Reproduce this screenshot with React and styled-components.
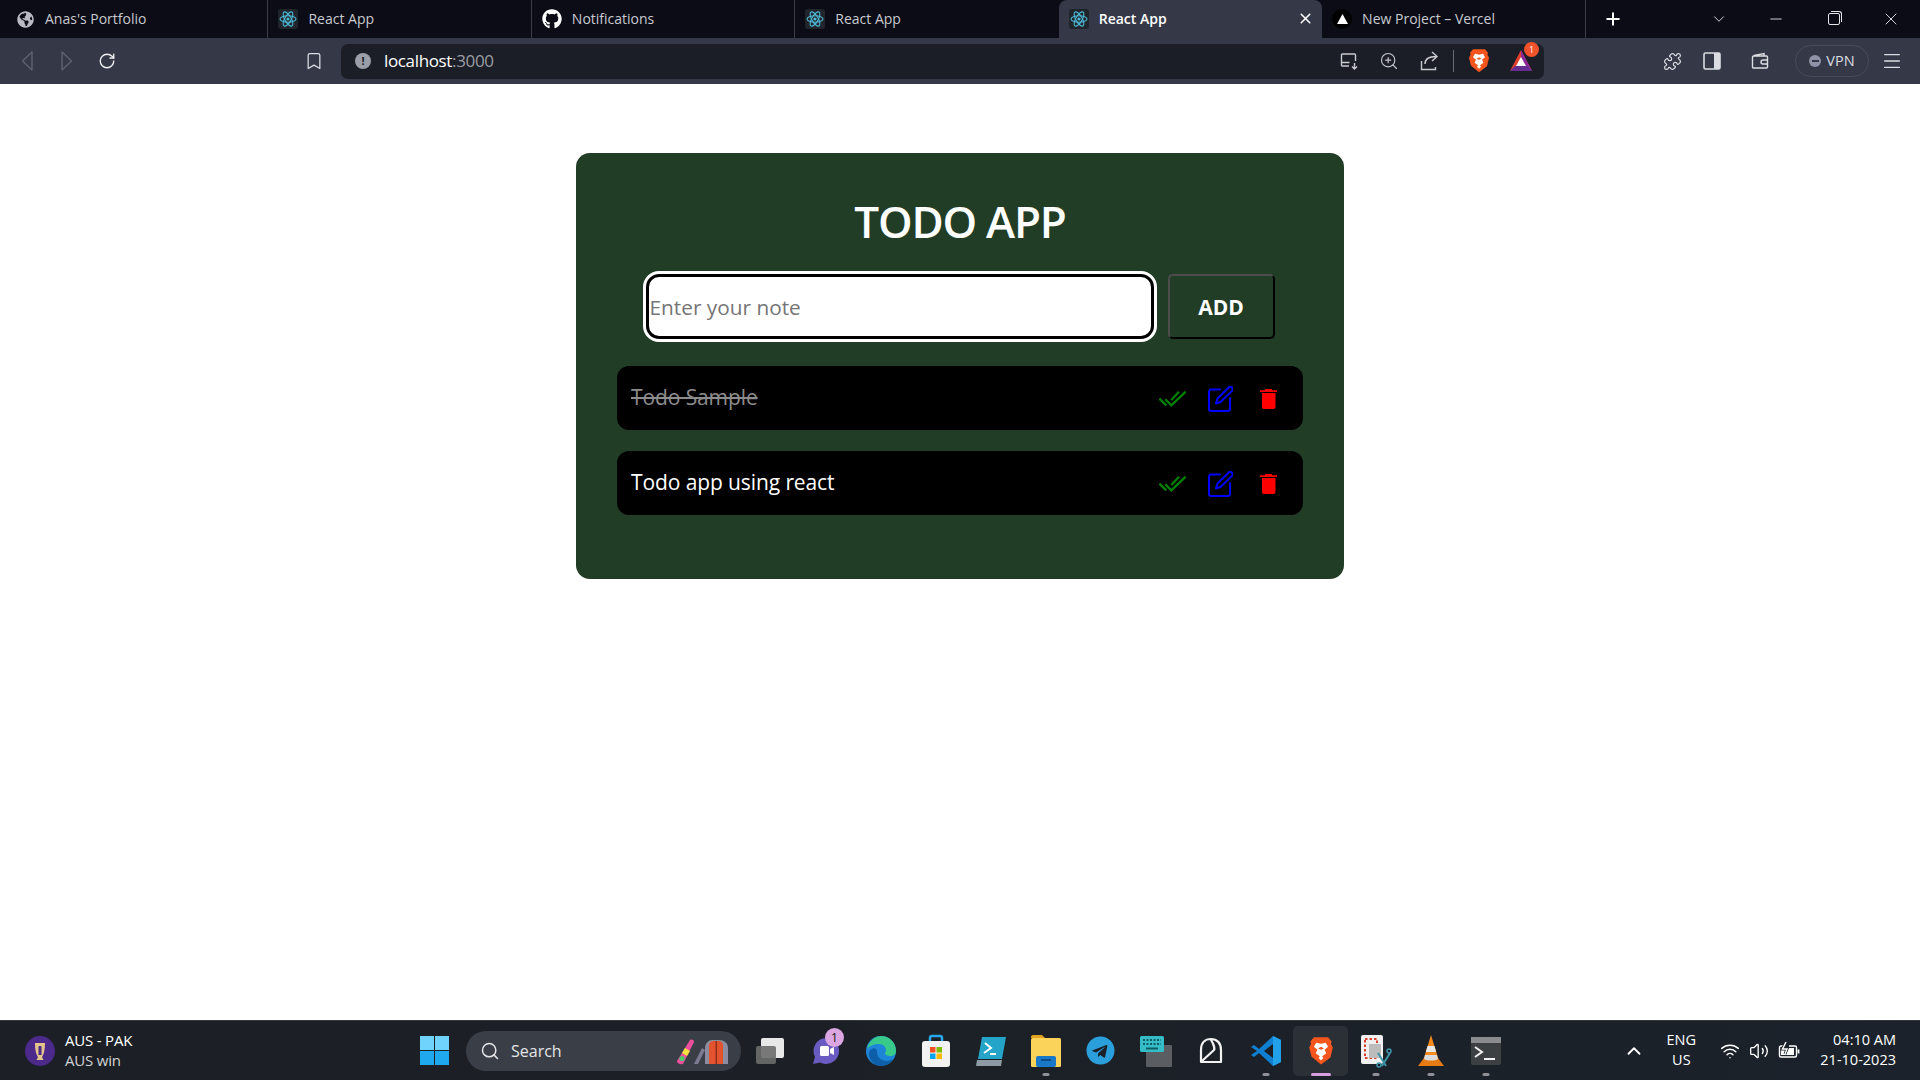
import styled, { createGlobalStyle } from "styled-components";
import { FaGithub, FaGlobeAmericas, FaTelegram } from "react-icons/fa";
import {
  Bookmark,
  ChevronDown,
  ChevronUp,
  Menu,
  Minus,
  Plus,
  Puzzle,
  RotateCw,
  Search,
  Volume2,
  Wifi,
  X,
  ZoomIn,
} from "lucide-react";

const GlobalStyle = createGlobalStyle`
  * { box-sizing: border-box; }
  html, body { margin: 0; padding: 0; background: #fff; }
  body { font-family: "Open Sans", "Noto Sans", sans-serif; overflow: hidden; }
`;

const Page = styled.div`
  width: 1920px;
  height: 1080px;
  display: flex;
  flex-direction: column;
`;

/* browser chrome */
const TabBar = styled.div`
  height: 38px;
  flex: none;
  display: flex;
  padding-left: 5px;
  background: #0b0c16;
`;

const Tab = styled.div`
  position: relative;
  width: 263.7px;
  height: 38px;
  display: flex;
  align-items: center;
  padding-left: 10px;
  gap: 10px;
  font-size: 14px;
  color: ${(p) => (p.$active ? "#fff" : "#c8cad0")};
  font-weight: ${(p) => (p.$active ? 600 : 400)};
  background: ${(p) => (p.$active ? "#343847" : "transparent")};
  border-radius: ${(p) => (p.$active ? "8px 8px 0 0" : "0")};
  border-right: 1px solid ${(p) => (p.$active || p.$noLine ? "transparent" : "#3a3c46")};
`;

const TabTitle = styled.span`
  margin-top: -2px;
`;

const Favicon = styled.span`
  width: 20px;
  height: 20px;
  flex: none;
  display: flex;
  align-items: center;
  justify-content: center;
  border-radius: ${(p) => (p.$round ? "50%" : "3px")};
  background: ${(p) => p.$bg || "transparent"};
  color: ${(p) => p.$color || "#fff"};
`;

const TabClose = styled.span`
  position: absolute;
  right: 7px;
  top: 10px;
  display: flex;
  color: #fff;
`;

const WindowControls = styled.div`
  flex: 1;
  display: flex;
  align-items: center;
  color: #e4e5e9;
`;

const NewTab = styled.span`
  margin-left: 17px;
  display: flex;
  color: #fff;
`;

const TabsMenu = styled.span`
  margin: 0 20px 0 87px;
  display: flex;
`;

const WindowButton = styled.span`
  width: 57.5px;
  display: flex;
  justify-content: center;
`;

const RestoreIcon = styled.span`
  position: relative;
  width: 12px;
  height: 12px;
  border: 1px solid #e4e5e9;
  border-radius: 2px;
  &::after {
    content: "";
    position: absolute;
    top: -3px;
    right: -3px;
    width: 10px;
    height: 10px;
    border-top: 1px solid #e4e5e9;
    border-right: 1px solid #e4e5e9;
    border-radius: 0 3px 0 0;
  }
`;

const Toolbar = styled.div`
  height: 46px;
  flex: none;
  display: flex;
  align-items: center;
  padding-left: 7px;
  background: #343847;
  color: #dcdde2;
`;

const ToolButton = styled.span`
  width: ${(p) => p.$w || 40}px;
  height: 30px;
  flex: none;
  display: flex;
  align-items: center;
  justify-content: center;
  color: ${(p) => p.$color || "inherit"};
`;

const Spacer = styled.span`
  width: ${(p) => p.$w}px;
  flex: none;
`;

const AddressBar = styled.div`
  width: 1203px;
  height: 35px;
  margin-left: 7px;
  flex: none;
  display: flex;
  align-items: center;
  padding-left: 14px;
  border-radius: 7px;
  background: #1b1e26;
`;

const InfoDot = styled.span`
  width: 16px;
  height: 16px;
  border-radius: 50%;
  background: #9b9ea8;
  color: #1b1e26;
  font-size: 11px;
  font-weight: 700;
  line-height: 16px;
  text-align: center;
`;

const Url = styled.span`
  margin: -2px 0 0 13px;
  font-size: 17px;
  letter-spacing: -0.35px;
  color: #fff;
  span { color: #9a9ca4; }
`;

const AddressIcons = styled.div`
  margin-left: auto;
  display: flex;
  align-items: center;
`;

const Divider = styled.span`
  width: 1px;
  height: 22px;
  margin: 0 13px 0 4px;
  background: #6a6d78;
`;

const BatBadge = styled.span`
  position: absolute;
  top: -7px;
  right: -6px;
  width: 15px;
  height: 15px;
  border-radius: 50%;
  background: #f0522b;
  color: #fff;
  font-size: 9px;
  line-height: 15px;
  text-align: center;
`;

const BatWrap = styled.span`
  position: relative;
  display: flex;
`;

const VpnPill = styled.div`
  width: 74px;
  height: 32px;
  margin-left: 15px;
  padding-bottom: 2px;
  flex: none;
  display: flex;
  align-items: center;
  justify-content: center;
  gap: 5px;
  border: 1px solid #474b5a;
  border-radius: 16px;
  font-size: 14.5px;
  color: #dcdde2;
`;

const VpnDot = styled.span`
  width: 12px;
  height: 12px;
  margin-top: 2px;
  border-radius: 50%;
  background: #9093a8;
  display: flex;
  align-items: center;
  justify-content: center;
  &::after { content: ""; width: 7px; height: 2px; background: #343847; }
`;

/* todo app */
const Main = styled.main`
  flex: 1;
  background: #fff;
  padding-top: 69px;
`;

const Card = styled.section`
  width: 768px;
  height: 426px;
  margin: 0 auto;
  padding: 33px 41px 0;
  border-radius: 14px;
  background: #223d26;
`;

const Title = styled.h1`
  margin: 0;
  height: 72px;
  font-size: 44px;
  line-height: 70px;
  font-weight: 600;
  letter-spacing: -1.2px;
  text-align: center;
  color: #fff;
`;

const InputRow = styled.div`
  margin-top: 16px;
  display: flex;
  justify-content: center;
  gap: 14px;
`;

const NoteInput = styled.input`
  width: 508px;
  height: 65px;
  padding: 0 1px;
  background: #fff;
  border: 3px solid #000;
  border-radius: 13px;
  outline: 3px solid #fff;
  font-family: inherit;
  font-size: 20.8px;
  &::placeholder { color: #757575; opacity: 1; }
`;

const AddButton = styled.button`
  width: 107px;
  height: 65px;
  padding: 0;
  background: #223d26;
  color: #fff;
  border: 2px solid;
  border-color: #4c4c4c #000 #000 #4c4c4c;
  border-radius: 5px;
  font-family: inherit;
  font-size: 21px;
  font-weight: 700;
`;

const TodoList = styled.ul`
  list-style: none;
  margin: 27px 0 0;
  padding: 0;
  display: flex;
  flex-direction: column;
  gap: 21px;
`;

const TodoRow = styled.li`
  height: 64px;
  display: flex;
  align-items: center;
  padding: 0 26px 0 14px;
  border-radius: 12px;
  background: #000;
`;

const TodoText = styled.span`
  flex: 1;
  margin-top: -2px;
  font-size: 21px;
  letter-spacing: -0.1px;
  color: ${(p) => (p.$done ? "#8c8c8c" : "#fff")};
  text-decoration: ${(p) => (p.$done ? "line-through" : "none")};
`;

const TodoActions = styled.div`
  display: flex;
  align-items: center;
  margin-top: 2px;
  gap: 22px;
`;

const TrashSvg = styled.svg`
  margin-left: 5px;
`;

/* taskbar */
const Taskbar = styled.footer`
  height: 60px;
  flex: none;
  display: flex;
  align-items: center;
  padding-left: 25px;
  background: linear-gradient(90deg, #1c1f25 0%, #1c2026 40%, #1b222b 100%);
  border-top: 1px solid #33363c;
  color: #fff;
`;

const Widget = styled.div`
  width: 395px;
  flex: none;
  display: flex;
  align-items: center;
  gap: 10px;
`;

const WidgetText = styled.div`
  margin-top: -2px;
  font-size: 15px;
  line-height: 20px;
  letter-spacing: -0.2px;
  small { display: block; font-size: 15px; color: #d2d3d6; }
`;

const WinLogo = styled.div`
  width: 29px;
  height: 29px;
  flex: none;
  display: grid;
  grid-template-columns: 1fr 1fr;
  gap: 1px;
  span:nth-child(-n + 2) { background: #6fd3fb; }
  span:nth-child(n + 3) { background: #1fa8ee; }
`;

const SearchBox = styled.div`
  position: relative;
  width: 275px;
  height: 40px;
  margin-left: 17px;
  flex: none;
  display: flex;
  align-items: center;
  gap: 11px;
  padding-left: 14px;
  border-radius: 20px;
  background: #3a3f47;
  font-size: 16px;
  color: #e4e5e7;
`;

const SearchArt = styled.svg`
  position: absolute;
  right: 9px;
  top: 7px;
`;

const Dock = styled.div`
  margin-left: 2px;
  display: flex;
`;

const DockItem = styled.div`
  position: relative;
  width: 55px;
  height: 50px;
  display: flex;
  align-items: center;
  justify-content: center;
  border-radius: 5px;
  background: ${(p) => (p.$active ? "#2b2f36" : "transparent")};
  &::after {
    content: "";
    display: ${(p) => (p.$dot ? "block" : "none")};
    position: absolute;
    bottom: 0;
    left: 50%;
    transform: translateX(-50%);
    width: ${(p) => (p.$active ? "20px" : "7px")};
    height: 3px;
    border-radius: 2px;
    background: ${(p) => (p.$active ? "#d99ee0" : "#8f9196")};
  }
`;

const ChatBadge = styled.span`
  position: absolute;
  top: 2px;
  right: 9px;
  width: 19px;
  height: 19px;
  border-radius: 50%;
  background: #dba6e2;
  color: #111;
  font-size: 12px;
  line-height: 19px;
  text-align: center;
`;

const Tray = styled.div`
  margin-left: auto;
  padding-right: 24px;
  display: flex;
  align-items: center;
  font-size: 14.5px;
`;

const TrayLang = styled.div`
  width: 40px;
  margin: -1px 19px 0 16px;
  line-height: 20px;
  text-align: center;
`;

const TrayIcons = styled.div`
  display: flex;
  align-items: center;
  gap: 9px;
`;

const TrayClock = styled.div`
  margin: -1px 0 0 20px;
  line-height: 20px;
  text-align: right;
`;

/* drawings */
const ReactIcon = () => (
  <svg width="20" height="20" viewBox="0 0 20 20" fill="none" stroke="#4fb8d4" strokeWidth="1.1">
    <rect width="20" height="20" rx="3" fill="#20252b" stroke="none" />
    <ellipse cx="10" cy="10" rx="8" ry="3.2" />
    <ellipse cx="10" cy="10" rx="8" ry="3.2" transform="rotate(60 10 10)" />
    <ellipse cx="10" cy="10" rx="8" ry="3.2" transform="rotate(120 10 10)" />
    <circle cx="10" cy="10" r="1.6" fill="#4fb8d4" stroke="none" />
  </svg>
);

const Triangle = ({ dir, color }) => (
  <svg width="14" height="22" viewBox="0 0 14 22" fill="none" stroke={color} strokeWidth="1.4" strokeLinejoin="round">
    <path d={dir === "left" ? "M12 2 2.5 11 12 20Z" : "M2 2 11.5 11 2 20Z"} />
  </svg>
);

const CastIcon = () => (
  <svg width="20" height="20" viewBox="0 0 20 20" fill="none" stroke="#c9cad0" strokeWidth="1.4">
    <path d="M10 15H3.500a1 1 0 0 1-1-1V4a1 1 0 0 1 1-1h12a1 1 0 0 1 1 1v6M2.500 11.500h8M15.500 12v6M13 15.500l2.500 2.500 2.500-2.500" />
  </svg>
);

const ShareIcon = () => (
  <svg width="20" height="22" viewBox="0 0 20 22" fill="none" stroke="#c9cad0" strokeWidth="1.4">
    <path d="M2.500 11v8.500h14V17M6 14c0-5 4-7.500 11-7.500M13 2l5 4.500-5 4.500" />
  </svg>
);

const BraveIcon = ({ size = 22 }) => (
  <svg width={size} height={size * 1.15} viewBox="0 0 22 25">
    <path d="M5 1h12l3 3.500-.6 2 1.600 3-2 8.500L11 24l-8-6.500L1 9.500l1.600-3L2 4.500Z" fill="#f4561d" />
    <path d="M11 6.500 7 5.500 5 9l3 2.500-1.500 3L10 17l-1 1.500 2 2 2-2-1-1.500 3.500-2.500-1.500-3L17 9l-2-3.500Z" fill="#fff" />
    <path d="M8.500 10.500 11 11.500l2.500-1L11 9Z" fill="#f4561d" />
  </svg>
);

const BatIcon = () => (
  <BatWrap>
    <svg width="24" height="24" viewBox="0 0 24 24">
      <path d="M12 1 23 22H1Z" fill="#e0402a" />
      <path d="M12 1 23 22H12Z" fill="#8a2a9c" />
      <path d="M1 22 6 17h12l5 5Z" fill="#662d91" />
      <path d="M12 8l5 9H7Z" fill="#fff" />
    </svg>
    <BatBadge>1</BatBadge>
  </BatWrap>
);

const SidebarIcon = () => (
  <svg width="18" height="18" viewBox="0 0 18 18">
    <rect x="1" y="1" width="16" height="16" rx="1.500" fill="none" stroke="#dcdde2" strokeWidth="1.600" />
    <rect x="11" y="1" width="6" height="16" fill="#dcdde2" />
  </svg>
);

const WalletIcon = () => (
  <svg width="18" height="18" viewBox="0 0 18 18" fill="none" stroke="#dcdde2" strokeWidth="1.400">
    <path d="M3 3.500 13 1.500V4M1.500 5a1 1 0 0 1 1-1h13a1 1 0 0 1 1 1v10a1 1 0 0 1-1 1h-13a1 1 0 0 1-1-1ZM16.500 8H12a2 2 0 0 0 0 4h4.500" />
  </svg>
);

const CheckIcon = () => (
  <svg width="27" height="16" viewBox="0 0 27 16" fill="none" stroke="#008000" strokeWidth="2.300">
    <path d="M.4 7.700 7.300 14.300M6.300 8.300 12.300 14.300 26.700.6M12.300 9 20 .8" />
  </svg>
);

const EditIcon = () => (
  <svg width="25" height="26" viewBox="0 0 25 26" fill="none" stroke="#0000ff" strokeWidth="2" strokeLinejoin="round" strokeLinecap="round">
    <path d="M12 3.500H3a2 2 0 0 0-2 2V23a2 2 0 0 0 2 2h17a2 2 0 0 0 2-2V12" />
    <path d="M8 17.500 9.500 12.500 20.500 1.700a2.200 2.200 0 0 1 3.500 3.200L12.500 16Z" />
  </svg>
);

const TrashIcon = () => (
  <TrashSvg width="17" height="20" viewBox="0 0 17 20" fill="#ff0000">
    <path d="M5 0h7v1.200h5v1.800H0V1.200h5Z" />
    <path d="M2 4h13.500v14a2 2 0 0 1-2 2h-9.500a2 2 0 0 1-2-2Z" />
  </TrashSvg>
);

const TrophyIcon = () => (
  <svg width="30" height="30" viewBox="0 0 30 30">
    <ellipse cx="15" cy="15" rx="15" ry="15" fill="#4c2a8c" />
    <path d="M10 7h10c0 8-1.500 12-3 14l1.500 3h-7l1.500-3c-1.500-2-3-6-3-14Z" fill="#e3c48a" />
    <path d="M13.500 10h3v9h-3Z" fill="#4c2a8c" />
  </svg>
);

const SearchArtwork = () => (
  <SearchArt width="56" height="27" viewBox="0 0 56 27">
    <path d="M1 23 14 2c2-1 4 0 4 2L7 26c-3 1-6-1-6-3Z" fill="#ee4f9d" />
    <path d="M6 15l3-5 5 3-3 5Z" fill="#f3e23c" />
    <circle cx="6" cy="20.500" r="2.600" fill="#49c96a" />
    <path d="M18 26 26 10l3 2-7 14Z" fill="#7c7a92" />
    <path d="M29 26V10c0-5 4-8 7-8h7c5 0 9 3 9 8v16Z" fill="#8c8ca0" />
    <path d="M33 26V7c0-2 2-4 4-4h6c2 0 4 2 4 4v19Z" fill="#e2532e" />
    <path d="M39.500 3h1.500v23h-1.500Z" fill="#8d2f1a" />
  </SearchArt>
);

const TaskViewIcon = () => (
  <svg width="32" height="32" viewBox="0 0 32 32">
    <rect x="6" y="3" width="23" height="20" rx="2" fill="#e8e8e8" />
    <rect x="1" y="11" width="20" height="18" rx="2" fill="#6b6b6b" fillOpacity="0.9" />
  </svg>
);

const ChatIcon = () => (
  <svg width="30" height="30" viewBox="0 0 30 30">
    <path d="M15 2a13 13 0 1 1-6 24.500L2 28l2-7A13 13 0 0 1 15 2Z" fill="#6a5bc2" />
    <rect x="9" y="10" width="9" height="10" rx="1.500" fill="#fff" />
    <path d="M19 13l4-2v8l-4-2Z" fill="#fff" />
  </svg>
);

const EdgeIcon = () => (
  <svg width="32" height="32" viewBox="0 0 32 32">
    <circle cx="16" cy="16" r="15" fill="#1d86d8" />
    <path d="M2 14C4 5 11 1 16 1c8 0 15 6 15 15 0 3-2 5-6 5-3 0-5-1-5-3 0-1 1-1 1-3 0-3-3-6-7-6-5 0-10 2-12 5Z" fill="#39c98a" />
    <path d="M12 17c0 5 4 9 10 9 2 0 4-1 6-2-3 5-8 7-12 7-8 0-13-8-12-14 2-4 8-6 8 0Z" fill="#0c5fa8" />
  </svg>
);

const StoreIcon = () => (
  <svg width="30" height="34" viewBox="0 0 30 34">
    <path d="M9 8V4a2 2 0 0 1 2-2h8a2 2 0 0 1 2 2v4" fill="none" stroke="#27a8e8" strokeWidth="2.500" />
    <rect x="1" y="7" width="28" height="26" rx="3" fill="#f2f2f2" />
    <rect x="9" y="13" width="5.500" height="5.500" fill="#f25022" />
    <rect x="15.500" y="13" width="5.500" height="5.500" fill="#7fba00" />
    <rect x="9" y="19.500" width="5.500" height="5.500" fill="#00a4ef" />
    <rect x="15.500" y="19.500" width="5.500" height="5.500" fill="#ffb900" />
  </svg>
);

const TerminalPsIcon = () => (
  <svg width="32" height="32" viewBox="0 0 32 32">
    <path d="M7 2h24l-4 22H3Z" fill="#24a4c9" />
    <path d="M10 8l6 5-7 5M15 19h6" fill="none" stroke="#fff" strokeWidth="2" />
    <path d="M2 25h25l-1 6H1Z" fill="#8d9aa3" />
  </svg>
);

const FolderIcon = () => (
  <svg width="32" height="34" viewBox="0 0 32 34">
    <path d="M1 3a2 2 0 0 1 2-2h9l3 3h-14Z" fill="#e0a21f" />
    <rect x="1" y="4" width="30" height="29" rx="1.500" fill="#fbd35a" />
    <rect x="6" y="22" width="20" height="11" rx="2" fill="#1a78c8" />
    <rect x="11" y="25" width="10" height="2" fill="#0c4d8a" />
  </svg>
);

const KeyboardIcon = () => (
  <svg width="32" height="32" viewBox="0 0 32 32">
    <rect x="6" y="10" width="26" height="22" rx="1" fill="#5a5d62" />
    <rect y="1" width="24" height="16" rx="1.500" fill="#36bcc7" />
    <path d="M3 5h18M3 9h18" stroke="#0c5d66" strokeWidth="2" strokeDasharray="2 1.500" />
    <rect x="6" y="12.500" width="12" height="2" fill="#0c5d66" />
  </svg>
);

const LoopIcon = () => (
  <svg width="24" height="28" viewBox="0 0 24 28" fill="none" stroke="#f2f2f2" strokeWidth="2.200" strokeLinejoin="round">
    <path d="M2 25V13C2 6 6 2 12 2s10 4 10 11v12ZM3 24 15 13c1-2-1-7-3-10" />
  </svg>
);

const VsCodeIcon = () => (
  <svg width="32" height="32" viewBox="0 0 32 32">
    <path d="M23 1 31 5v22l-8 4L9 18l-5 4-3-2 6-4-6-4 3-2 5 4Z" fill="#0f7fd1" />
    <path d="M23 9 14 16l9 7Z" fill="#1c2026" />
    <path d="M23 1 31 5v22l-8 4Z" fill="#23a0ea" />
  </svg>
);

const SnipIcon = () => (
  <svg width="32" height="34" viewBox="0 0 32 34">
    <rect x="1" y="1" width="22" height="29" rx="2" fill="#f0f0f0" />
    <rect x="5" y="5" width="12" height="19" fill="none" stroke="#d8432f" strokeWidth="2" strokeDasharray="2.500 2" />
    <rect x="9" y="10" width="12" height="14" fill="#bcbcbc" />
    <path d="M18 19l8 13M30 19l-8 13" stroke="#3f93a8" strokeWidth="2" />
    <circle cx="29" cy="17" r="2" fill="none" stroke="#3f93a8" strokeWidth="1.500" />
    <circle cx="19" cy="31" r="2" fill="none" stroke="#3f93a8" strokeWidth="1.500" />
  </svg>
);

const VlcIcon = () => (
  <svg width="28" height="34" viewBox="0 0 28 34">
    <path d="M14 1 22 27H6Z" fill="#f58a1f" />
    <path d="M10.500 12h7l1.700 6H8.800Z" fill="#e8e8e8" />
    <path d="M7 24c3 2 11 2 14 0l6 8H1Z" fill="#e77a12" />
    <path d="M8 21h12l1 4c-3 2-11 2-14 0Z" fill="#dcdcdc" />
  </svg>
);

const ConsoleIcon = () => (
  <svg width="32" height="32" viewBox="0 0 32 32">
    <rect x="1" y="2" width="30" height="28" rx="2" fill="#3d4043" />
    <rect x="1" y="2" width="30" height="6" fill="#8a8c8f" />
    <path d="M5 12l7 5-7 5" fill="none" stroke="#f2f2f2" strokeWidth="2" />
    <path d="M14 24h11" stroke="#f2f2f2" strokeWidth="2" />
  </svg>
);

const BatteryIcon = () => (
  <svg width="22" height="20" viewBox="0 0 22 20" fill="none" stroke="#fff" strokeWidth="1.400">
    <path d="M7 5H3a1.500 1.500 0 0 0-1.500 1.500v8A1.500 1.500 0 0 0 3 16h14a1.500 1.500 0 0 0 1.500-1.500v-8A1.500 1.500 0 0 0 17 5h-6" />
    <path d="M20.500 8.500v4" strokeWidth="1.800" />
    <rect x="3" y="7" width="13" height="7" fill="#fff" stroke="none" />
    <path d="M8 1 4.500 8H9l-2 5" stroke="#1b222b" strokeWidth="3" />
    <path d="M8 1 4.500 8H9l-2 5" />
  </svg>
);

const tabs = [
  { title: "Anas's Portfolio", icon: <Favicon $color="#b9bbc2"><FaGlobeAmericas size={17} /></Favicon> },
  { title: "React App", icon: <ReactIcon /> },
  { title: "Notifications", icon: <Favicon><FaGithub size={20} /></Favicon> },
  { title: "React App", icon: <ReactIcon />, noLine: true },
  { title: "React App", icon: <ReactIcon />, active: true },
  {
    title: "New Project – Vercel",
    icon: (
      <Favicon $bg="#000" $round>
        <svg width="11" height="10" viewBox="0 0 11 10"><path d="M5.500 0 11 10H0Z" fill="#fff" /></svg>
      </Favicon>
    ),
  },
];

const dock = [
  { icon: <TaskViewIcon /> },
  { icon: <ChatIcon />, badge: "1" },
  { icon: <EdgeIcon /> },
  { icon: <StoreIcon /> },
  { icon: <TerminalPsIcon /> },
  { icon: <FolderIcon />, dot: true },
  { icon: <FaTelegram size={29} color="#2a9fdc" /> },
  { icon: <KeyboardIcon /> },
  { icon: <LoopIcon /> },
  { icon: <VsCodeIcon />, dot: true },
  { icon: <BraveIcon size={26} />, dot: true, active: true },
  { icon: <SnipIcon />, dot: true },
  { icon: <VlcIcon />, dot: true },
  { icon: <ConsoleIcon />, dot: true },
];

const todos = [
  { id: 1, text: "Todo Sample", done: true },
  { id: 2, text: "Todo app using react", done: false },
];

export default function App() {
  return (
    <Page>
      <GlobalStyle />
      <TabBar>
        {tabs.map((tab, i) => (
          <Tab key={i} $active={tab.active} $noLine={tab.noLine}>
            {tab.icon}
            <TabTitle>{tab.title}</TabTitle>
            {tab.active && (
              <TabClose>
                <X size={17} strokeWidth={2.2} />
              </TabClose>
            )}
          </Tab>
        ))}
        <WindowControls>
          <NewTab>
            <Plus size={20} strokeWidth={2.4} />
          </NewTab>
          <TabsMenu>
            <ChevronDown size={18} strokeWidth={1.2} />
          </TabsMenu>
          <WindowButton>
            <Minus size={18} strokeWidth={1.2} />
          </WindowButton>
          <WindowButton>
            <RestoreIcon />
          </WindowButton>
          <WindowButton>
            <X size={20} strokeWidth={1.1} />
          </WindowButton>
        </WindowControls>
      </TabBar>

      <Toolbar>
        <ToolButton><Triangle dir="left" color="#5f636f" /></ToolButton>
        <ToolButton><Triangle dir="right" color="#5f636f" /></ToolButton>
        <ToolButton><RotateCw size={18} strokeWidth={1.8} color="#f0f0f2" /></ToolButton>
        <Spacer $w={167} />
        <ToolButton><Bookmark size={20} strokeWidth={1.5} /></ToolButton>
        <AddressBar>
          <InfoDot>!</InfoDot>
          <Url>localhost<span>:3000</span></Url>
          <AddressIcons>
            <ToolButton><CastIcon /></ToolButton>
            <ToolButton $color="#c9cad0"><ZoomIn size={20} strokeWidth={1.4} /></ToolButton>
            <ToolButton><ShareIcon /></ToolButton>
            <Divider />
            <ToolButton $w={24}><BraveIcon /></ToolButton>
            <Spacer $w={18} />
            <ToolButton $w={24}><BatIcon /></ToolButton>
            <Spacer $w={11} />
          </AddressIcons>
        </AddressBar>
        <Spacer $w={108} />
        <ToolButton><Puzzle size={19} strokeWidth={1.5} /></ToolButton>
        <ToolButton><SidebarIcon /></ToolButton>
        <Spacer $w={8} />
        <ToolButton><WalletIcon /></ToolButton>
        <VpnPill>
          <VpnDot />
          VPN
        </VpnPill>
        <ToolButton $w={46}><Menu size={22} strokeWidth={1.5} /></ToolButton>
      </Toolbar>

      <Main>
        <Card>
          <Title>TODO APP</Title>
          <InputRow>
            <NoteInput placeholder="Enter your note" />
            <AddButton>ADD</AddButton>
          </InputRow>
          <TodoList>
            {todos.map((todo) => (
              <TodoRow key={todo.id}>
                <TodoText $done={todo.done}>{todo.text}</TodoText>
                <TodoActions>
                  <CheckIcon />
                  <EditIcon />
                  <TrashIcon />
                </TodoActions>
              </TodoRow>
            ))}
          </TodoList>
        </Card>
      </Main>

      <Taskbar>
        <Widget>
          <TrophyIcon />
          <WidgetText>
            AUS - PAK
            <small>AUS win</small>
          </WidgetText>
        </Widget>
        <WinLogo>
          <span /><span /><span /><span />
        </WinLogo>
        <SearchBox>
          <Search size={20} strokeWidth={1.8} />
          Search
          <SearchArtwork />
        </SearchBox>
        <Dock>
          {dock.map((item, i) => (
            <DockItem key={i} $dot={item.dot} $active={item.active}>
              {item.icon}
              {item.badge && <ChatBadge>{item.badge}</ChatBadge>}
            </DockItem>
          ))}
        </Dock>
        <Tray>
          <ChevronUp size={22} strokeWidth={2} />
          <TrayLang>ENG<br />US</TrayLang>
          <TrayIcons>
            <Wifi size={20} strokeWidth={1.8} />
            <Volume2 size={20} strokeWidth={1.6} />
            <BatteryIcon />
          </TrayIcons>
          <TrayClock>04:10 AM<br />21-10-2023</TrayClock>
        </Tray>
      </Taskbar>
    </Page>
  );
}
